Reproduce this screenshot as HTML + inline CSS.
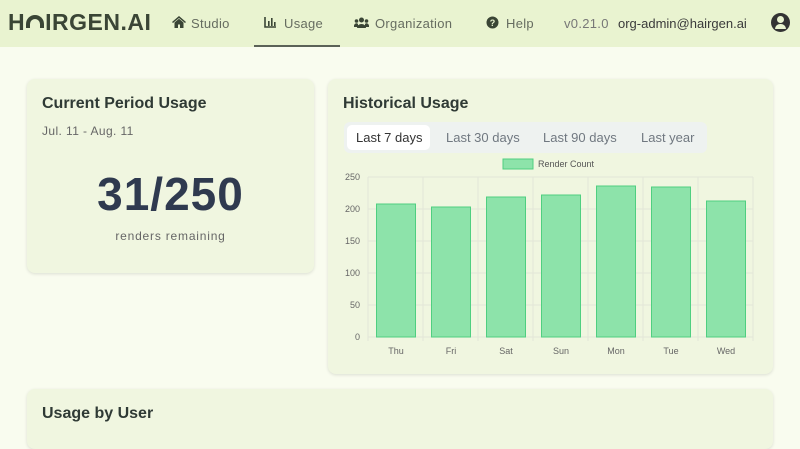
<!DOCTYPE html>
<html><head><meta charset="utf-8"><style>
*{margin:0;padding:0;box-sizing:border-box}
body{width:800px;height:434px;overflow:hidden;background:#f9fcef;font-family:"Liberation Sans",sans-serif;color:#2e3a2e;position:relative}
.hdr{position:absolute;left:0;top:0;width:800px;height:47px;background:#e9f3d0}
.abs{position:absolute;white-space:nowrap}
.nav{font-size:13px;color:#666c60;top:16px;letter-spacing:.3px}
.card{position:absolute;background:#f0f6e0;border-radius:8px;box-shadow:0 1px 3px rgba(0,0,0,.12)}
.h{font-size:16px;font-weight:bold;color:#2f3a35}
.tab{position:absolute;top:8px;font-size:13px;color:#707880}
</style></head><body>
<div class="hdr"></div>
<div class="abs" style="left:8px;top:9px;font-size:23px;font-weight:bold;color:#3a4535;letter-spacing:.5px">H<span style="display:inline-block;width:18px;height:13px;border:4px solid #3a4535;border-bottom:none;border-radius:9px 9px 0 0;vertical-align:2px;margin:0 1px"></span>IRGEN.AI</div>
<svg class="abs" style="left:172px;top:16px" width="14" height="12" fill="#3a4535"><path d="M7 0L0 6l1 1 6-5 6 5 1-1zM2.5 6.5V12h3.5V8.5h2V12h3.5V6.5L7 2.7z"/></svg>
<div class="abs nav" style="left:191px">Studio</div>
<svg class="abs" style="left:264px;top:16px" width="13" height="12"><path d="M1 1V11H12" stroke="#3a4535" stroke-width="1.6" fill="none"/><rect x="4" y="5" width="1.6" height="5" fill="#3a4535"/><rect x="7" y="2" width="1.6" height="8" fill="#3a4535"/><rect x="10" y="6" width="1.6" height="4" fill="#3a4535"/></svg>
<div class="abs nav" style="left:284px">Usage</div>
<div class="abs" style="left:254px;top:45px;width:86px;height:2px;background:#5b6257"></div>
<svg class="abs" style="left:354px;top:17px" width="15" height="11" fill="#3a4535"><circle cx="7.5" cy="3" r="2.5"/><circle cx="2.5" cy="4" r="1.8"/><circle cx="12.5" cy="4" r="1.8"/><path d="M3 11a4.5 4 0 0 1 9 0z"/><path d="M0 10a2.5 3 0 0 1 4-3v3zM15 10a2.5 3 0 0 0-4-3v3z"/></svg>
<div class="abs nav" style="left:375px">Organization</div>
<svg class="abs" style="left:486px;top:16px" width="13" height="13"><circle cx="6.5" cy="6.5" r="6" fill="#3a4535"/><text x="6.5" y="10" font-size="9" font-weight="bold" fill="#e9f3d0" text-anchor="middle" font-family="Liberation Sans">?</text></svg>
<div class="abs nav" style="left:506px">Help</div>
<div class="abs nav" style="left:564px;color:#777">v0.21.0</div>
<div class="abs nav" style="left:618px;color:#3a3a3a;letter-spacing:0">org-admin@hairgen.ai</div>
<div class="abs" style="left:771px;top:13px;width:19px;height:19px;border-radius:50%;background:#333"><div style="position:absolute;left:6px;top:3px;width:7px;height:7px;border-radius:50%;background:#e9f3d0"></div><div style="position:absolute;left:4px;top:11px;width:11px;height:5px;border-radius:5px 5px 0 0;background:#e9f3d0"></div></div>

<div class="card" style="left:27px;top:79px;width:287px;height:194px">
<div class="abs h" style="left:15px;top:16px">Current Period Usage</div>
<div class="abs" style="left:15px;top:45px;font-size:12px;color:#666;letter-spacing:.4px">Jul. 11 - Aug. 11</div>
<div class="abs" style="left:0;width:287px;text-align:center;top:88px;font-size:46px;font-weight:bold;color:#2f3a4f;letter-spacing:1px">31/250</div>
<div class="abs" style="left:0;width:287px;text-align:center;top:150px;font-size:12px;color:#666;letter-spacing:.8px">renders remaining</div>
</div>

<div class="card" style="left:328px;top:79px;width:445px;height:295px">
<div class="abs h" style="left:15px;top:16px">Historical Usage</div>
<div class="abs" style="left:16px;top:43px;width:363px;height:31px;background:#eef2f0;border-radius:6px">
<div class="abs" style="left:3px;top:3px;width:83px;height:25px;background:#fff;border-radius:5px"></div>
<div class="tab" style="left:12px;color:#333">Last 7 days</div>
<div class="tab" style="left:102px">Last 30 days</div>
<div class="tab" style="left:199px">Last 90 days</div>
<div class="tab" style="left:297px">Last year</div>
</div>
</div>
<svg class="abs" style="left:0;top:0" width="800" height="434" font-family="Liberation Sans" font-size="9" fill="#666">
<rect x="503" y="159" width="30" height="10" fill="#8de3aa" stroke="#4fcf80"/>
<text x="538" y="167" fill="#555">Render Count</text>
<g stroke="#e2e6d8">
<line x1="368" y1="177" x2="753" y2="177"/><line x1="368" y1="209" x2="753" y2="209"/><line x1="368" y1="241" x2="753" y2="241"/><line x1="368" y1="273" x2="753" y2="273"/><line x1="368" y1="305" x2="753" y2="305"/><line x1="368" y1="337" x2="753" y2="337"/>
<line x1="368" y1="177" x2="368" y2="341"/><line x1="423" y1="177" x2="423" y2="341"/><line x1="478" y1="177" x2="478" y2="341"/><line x1="533" y1="177" x2="533" y2="341"/><line x1="588" y1="177" x2="588" y2="341"/><line x1="643" y1="177" x2="643" y2="341"/><line x1="698" y1="177" x2="698" y2="341"/><line x1="753" y1="177" x2="753" y2="341"/>
</g>
<g text-anchor="end"><text x="360" y="180">250</text><text x="360" y="212">200</text><text x="360" y="244">150</text><text x="360" y="276">100</text><text x="360" y="308">50</text><text x="360" y="340">0</text></g>
<g fill="#8de3aa" stroke="#4fcf80">
<rect x="376.5" y="204" width="39" height="133"/><rect x="431.5" y="207" width="39" height="130"/><rect x="486.5" y="197" width="39" height="140"/><rect x="541.5" y="195" width="39" height="142"/><rect x="596.5" y="186" width="39" height="151"/><rect x="651.5" y="187" width="39" height="150"/><rect x="706.5" y="201" width="39" height="136"/>
</g>
<g text-anchor="middle"><text x="396" y="354">Thu</text><text x="451" y="354">Fri</text><text x="506" y="354">Sat</text><text x="561" y="354">Sun</text><text x="616" y="354">Mon</text><text x="671" y="354">Tue</text><text x="726" y="354">Wed</text></g>
</svg>

<div class="card" style="left:27px;top:389px;width:746px;height:60px">
<div class="abs h" style="left:15px;top:16px">Usage by User</div>
</div>
</body></html>
